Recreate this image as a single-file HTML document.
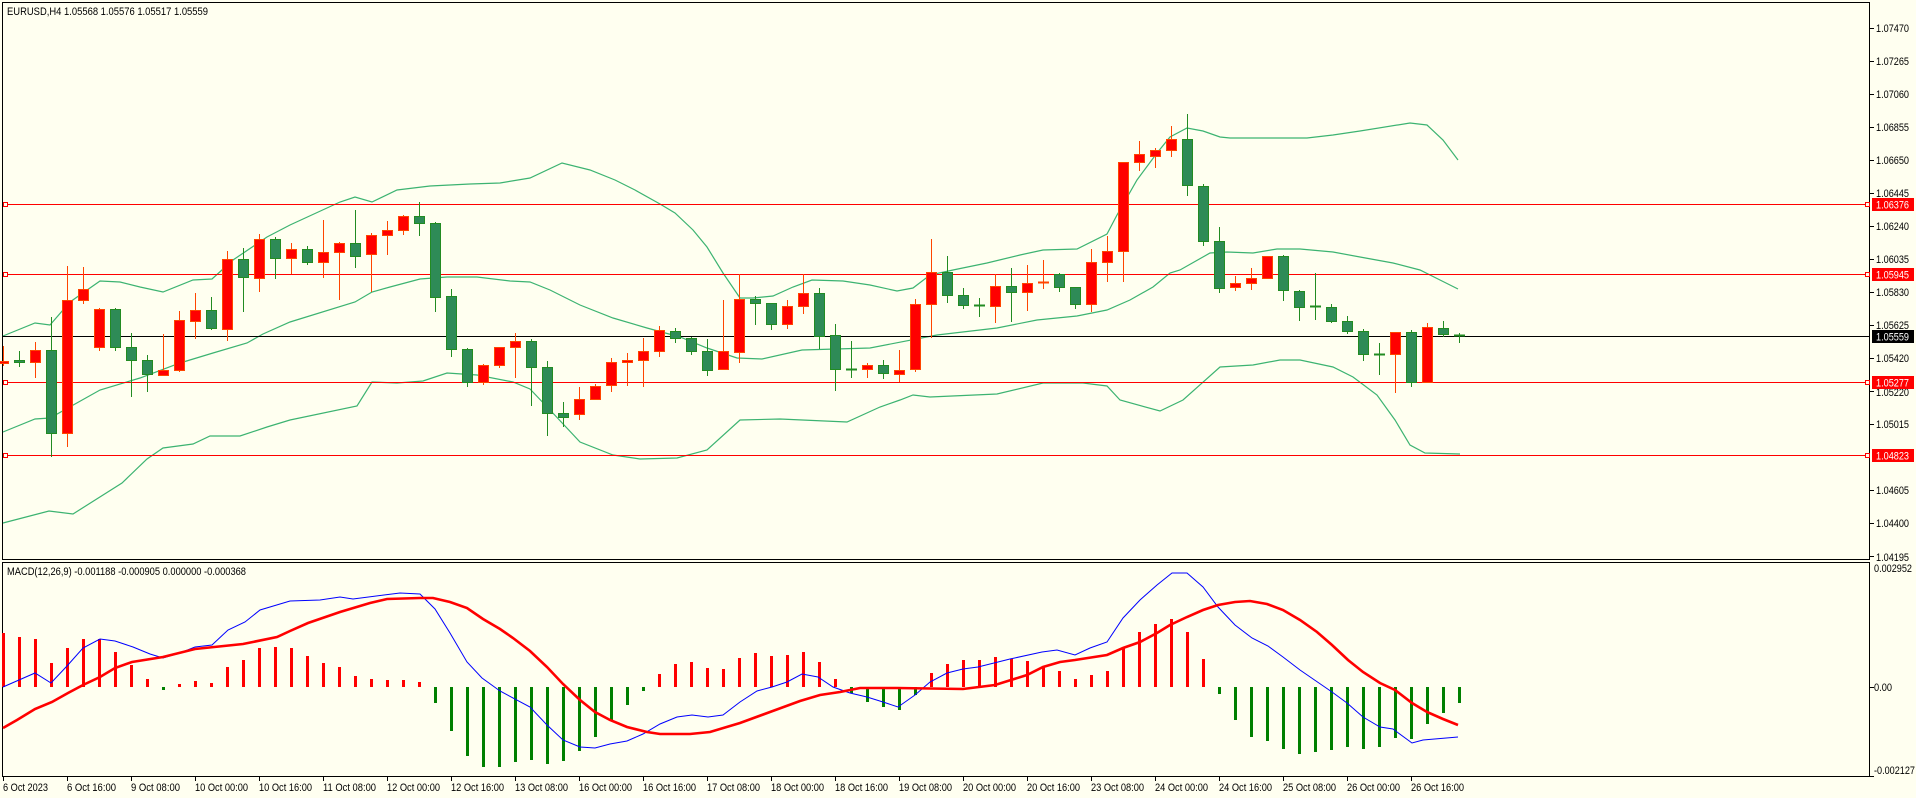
<!DOCTYPE html>
<html><head><meta charset="utf-8">
<style>
html,body{margin:0;padding:0;background:#FFFFF0;}
body{width:1916px;height:798px;overflow:hidden;position:relative;font-family:"Liberation Sans",sans-serif;}
svg{position:absolute;left:0;top:0;}
svg text{font-family:"Liberation Sans",sans-serif;font-size:11px;}
</style></head>
<body>
<svg id="s" width="1916" height="798" viewBox="0 0 1916 798" xmlns="http://www.w3.org/2000/svg">
<rect x="0" y="0" width="1916" height="798" fill="#FFFFF0"/>
<rect x="2.5" y="2.5" width="1867" height="557" fill="none" stroke="#000" stroke-width="1"/>
<rect x="2.5" y="562.5" width="1867" height="214" fill="none" stroke="#000" stroke-width="1"/>
<g id="bands"></g>
<g stroke="#FF0000" stroke-width="1">
<line x1="3" y1="204.5" x2="1869" y2="204.5"/>
<line x1="3" y1="274.5" x2="1869" y2="274.5"/>
<line x1="3" y1="382.5" x2="1869" y2="382.5"/>
<line x1="3" y1="455.5" x2="1869" y2="455.5"/>
</g>
<g fill="#FFFFF0" stroke="#FF0000" stroke-width="1">
<rect x="3.5" y="202.5" width="4" height="4"/><rect x="3.5" y="272.5" width="4" height="4"/>
<rect x="3.5" y="380.5" width="4" height="4"/><rect x="3.5" y="453.5" width="4" height="4"/>
<rect x="1865.5" y="202.5" width="4" height="4"/><rect x="1865.5" y="272.5" width="4" height="4"/>
<rect x="1865.5" y="380.5" width="4" height="4"/><rect x="1865.5" y="453.5" width="4" height="4"/>
</g>
<line x1="3" y1="336.5" x2="1869" y2="336.5" stroke="#000" stroke-width="1"/>
<g id="candles"></g>
<g id="macd"></g>
<text x="7" y="15" fill="#000" textLength="201" lengthAdjust="spacingAndGlyphs">EURUSD,H4  1.05568 1.05576 1.05517 1.05559</text>
<text x="7" y="575" fill="#000" textLength="239" lengthAdjust="spacingAndGlyphs">MACD(12,26,9) -0.001188 -0.000905 0.000000 -0.000368</text>
<g fill="#000" id="ax">
<text x="1876" y="32">1.07470</text>
<text x="1876" y="65">1.07265</text>
<text x="1876" y="98">1.07060</text>
<text x="1876" y="131">1.06855</text>
<text x="1876" y="164">1.06650</text>
<text x="1876" y="197">1.06445</text>
<text x="1876" y="230">1.06240</text>
<text x="1876" y="263">1.06035</text>
<text x="1876" y="296">1.05830</text>
<text x="1876" y="329">1.05625</text>
<text x="1876" y="362">1.05420</text>
<text x="1876" y="396">1.05220</text>
<text x="1876" y="428">1.05015</text>
<text x="1876" y="494">1.04605</text>
<text x="1876" y="527">1.04400</text>
<text x="1876" y="561">1.04195</text>
</g>
<g fill="#000">
<text x="1874" y="572" textLength="38" lengthAdjust="spacingAndGlyphs">0.002952</text>
<text x="1874" y="691" textLength="18" lengthAdjust="spacingAndGlyphs">0.00</text>
<text x="1874" y="774" textLength="41" lengthAdjust="spacingAndGlyphs">-0.002127</text>
</g>
<g stroke="#000" stroke-width="1" id="rt"></g>
<rect x="1872" y="198" width="42" height="13" fill="#FF0000"/><text class="pl" x="1876" y="208.5" fill="#fff">1.06376</text>
<rect x="1872" y="268" width="42" height="13" fill="#FF0000"/><text class="pl" x="1876" y="278.5" fill="#fff">1.05945</text>
<rect x="1872" y="330" width="42" height="13" fill="#000"/><text class="pl" x="1876" y="340.5" fill="#fff">1.05559</text>
<rect x="1872" y="376" width="42" height="13" fill="#FF0000"/><text class="pl" x="1876" y="386.5" fill="#fff">1.05277</text>
<rect x="1872" y="449" width="42" height="13" fill="#FF0000"/><text class="pl" x="1876" y="459.5" fill="#fff">1.04823</text>
<g fill="#000" id="dates">
<text x="3" y="791">6 Oct 2023</text>
<text x="67" y="791">6 Oct 16:00</text>
<text x="131" y="791">9 Oct 08:00</text>
<text x="195" y="791">10 Oct 00:00</text>
<text x="259" y="791">10 Oct 16:00</text>
<text x="323" y="791">11 Oct 08:00</text>
<text x="387" y="791">12 Oct 00:00</text>
<text x="451" y="791">12 Oct 16:00</text>
<text x="515" y="791">13 Oct 08:00</text>
<text x="579" y="791">16 Oct 00:00</text>
<text x="643" y="791">16 Oct 16:00</text>
<text x="707" y="791">17 Oct 08:00</text>
<text x="771" y="791">18 Oct 00:00</text>
<text x="835" y="791">18 Oct 16:00</text>
<text x="899" y="791">19 Oct 08:00</text>
<text x="963" y="791">20 Oct 00:00</text>
<text x="1027" y="791">20 Oct 16:00</text>
<text x="1091" y="791">23 Oct 08:00</text>
<text x="1155" y="791">24 Oct 00:00</text>
<text x="1219" y="791">24 Oct 16:00</text>
<text x="1283" y="791">25 Oct 08:00</text>
<text x="1347" y="791">26 Oct 00:00</text>
<text x="1411" y="791">26 Oct 16:00</text>
</g>
<g id="ticks"></g>
</svg>
<script>
var NS="http://www.w3.org/2000/svg";
function el(p,t,a){var e=document.createElementNS(NS,t);for(var k in a)e.setAttribute(k,a[k]);document.getElementById(p).appendChild(e);return e;}
function fit(t,w){t.setAttribute("textLength",w);t.setAttribute("lengthAdjust","spacingAndGlyphs");}
Array.prototype.forEach.call(document.querySelectorAll("#ax text, text.pl"),function(t){fit(t,33);});
Array.prototype.forEach.call(document.querySelectorAll("#dates text"),function(t){var s=t.textContent;fit(t,s=="6 Oct 2023"?45:(s.length>=12?53:49));});
[28,61,94,127,160,193,226,259,292,325,358,391,424,490,523,556,687,776].forEach(function(y){el("rt","line",{x1:1870,y1:y+0.5,x2:1874,y2:y+0.5});});
for(var k=0;k<23;k++){var x=3.5+64*k;el("ticks","line",{x1:x,y1:777,x2:x,y2:781,stroke:"#000"});}
var upper=[[3,336],[35,323],[50,325],[70,302],[100,281],[120,282],[140,287],[163,292],[193,280],[212,279],[233,260],[267,237],[290,225],[340,202],[355,197],[372,202],[397,190],[430,186],[470,184],[500,183],[530,178],[562,163],[590,170],[615,180],[635,190],[660,204],[675,213],[693,230],[707,247],[723,273],[740,298],[753,298],[773,296],[793,287],[812,280],[843,281],[870,285],[897,291],[913,288],[930,275],[953,270],[987,263],[1020,255],[1043,250],[1077,249],[1107,234],[1117,215],[1137,180],[1157,153],[1170,137],[1187,128],[1203,131],[1220,137],[1230,138],[1307,138],[1333,135],[1360,131],[1410,123],[1427,125],[1443,140],[1458,160]];
var middle=[[3,432],[35,419],[50,418],[100,390],[140,378],[180,363],[213,353],[247,343],[263,334],[290,322],[355,302],[372,292],[390,287],[420,279],[447,277],[477,277],[510,281],[530,282],[550,290],[580,305],[613,318],[647,328],[680,337],[707,348],[737,358],[762,359],[802,350],[870,348],[937,335],[997,328],[1037,320],[1077,316],[1107,310],[1130,300],[1153,287],[1170,273],[1180,270],[1210,253],[1227,252],[1253,253],[1277,249],[1300,249],[1333,252],[1360,257],[1393,263],[1420,270],[1440,280],[1458,289]];
var lower=[[3,523],[49,511],[73,514],[122,483],[147,459],[163,448],[193,444],[210,436],[240,436],[267,427],[290,420],[357,406],[372,382],[397,383],[423,381],[447,373],[477,375],[513,382],[530,389],[550,410],[580,442],[613,455],[640,459],[677,458],[707,450],[740,420],[780,419],[847,422],[880,407],[900,400],[913,395],[930,397],[997,394],[1043,383],[1083,383],[1107,386],[1120,400],[1160,411],[1183,400],[1220,367],[1253,365],[1280,360],[1300,360],[1333,367],[1353,377],[1377,395],[1395,420],[1410,445],[1425,453],[1460,454]];
[upper,middle,lower].forEach(function(b){el("bands","polyline",{points:b.map(function(p){return p.join(",")}).join(" "),fill:"none",stroke:"#3CB371","stroke-width":1.2});});
var C=[["r",361,363,346,366],["g",360,362,351,367],["r",350,362,342,378],["g",350,433,317,457],["r",300,433,266,447],["r",289,300,267,304],["r",309,347,308,351],["g",309,347,308,351],["g",347,360,333,397],["g",360,374,355,392],["r",370,375,334,375],["r",320,370,311,372],["r",310,321,293,339],["g",310,328,297,330],["r",259,329,251,341],["g",259,277,248,312],["r",239,278,234,292],["g",239,258,237,279],["r",249,258,243,274],["g",249,262,246,265],["r",252,262,220,278],["r",243,252,242,300],["g",243,256,210,268],["r",235,254,233,292],["r",230,235,221,255],["r",216,230,215,235],["g",216,223,202,236],["g",223,297,222,312],["g",296,349,289,357],["g",349,382,348,387],["r",365,382,364,385],["r",347,365,347,368],["r",341,347,333,378],["g",341,367,339,406],["g",367,413,361,436],["g",413,417,402,427],["r",399,414,387,420],["r",386,399,384,400],["r",362,385,358,392],["r",360,362,353,386],["r",351,360,338,387],["r",330,351,326,357],["g",331,338,328,343],["g",338,351,337,355],["g",351,370,339,376],["r",351,369,300,369],["r",299,352,274,363],["g",299,303,296,325],["g",303,324,303,330],["r",306,324,300,329],["r",293,306,274,314],["g",293,336,288,349],["g",335,369,324,391],["g",369,370,341,378],["r",365,369,363,378],["g",365,373,360,379],["r",370,374,350,382],["r",304,369,299,372],["r",272,304,239,338],["g",272,295,256,303],["g",295,305,288,309],["g",305,306,298,317],["r",286,306,274,323],["g",286,292,268,322],["r",283,292,265,311],["r",282,283,260,289],["g",274,287,273,292],["g",287,304,287,309],["r",262,304,249,312],["r",251,262,236,282],["r",162,251,162,282],["r",154,162,141,171],["r",150,156,148,168],["r",139,150,126,157],["g",139,185,114,196],["g",186,241,184,246],["g",241,288,227,293],["r",283,287,276,291],["r",278,283,268,290],["r",256,278,256,279],["g",256,290,255,301],["g",291,307,290,321],["g",306,307,273,320],["g",307,321,304,323],["g",321,331,316,334],["g",331,354,329,361],["g",354,354,343,375],["r",332,354,332,393],["g",332,382,330,387],["r",327,382,323,382],["g",328,334,321,337],["g",335,335,333,343]];
C.forEach(function(c,i){
 var x=3+16*i, g=c[0]=="g";
 var wc=g?"#228B22":"#FF4500", fc=g?"#2E8B57":"#FF0000";
 el("candles","line",{x1:x+0.5,y1:c[3],x2:x+0.5,y2:c[4],stroke:wc,"stroke-width":1});
 if(c[2]-c[1]<=1){el("candles","line",{x1:x-5,y1:c[1]+0.5,x2:x+6,y2:c[1]+0.5,stroke:wc,"stroke-width":2});}
 else el("candles","rect",{x:x-4.5,y:c[1]+0.5,width:10,height:c[2]-c[1],fill:fc,stroke:wc,"stroke-width":1});
});
var H=[633,637,639,663,648,639,639,652,665,679,690,684,681,683,667,660,648,647,648,656,663,667,676,679,680,680,682,703,731,756,767,767,762,760,764,761,751,737,720,705,691,674,664,662,668,669,658,653,656,655,652,662,679,693,702,707,710,695,673,664,660,660,657,659,661,666,671,679,675,671,648,632,624,619,632,659,694,720,737,741,749,754,752,750,747,749,747,738,739,724,713,703];
H.forEach(function(y,i){var x=3+16*i;var up=y<687;
 el("macd","rect",{x:x-1,y:up?y:687,width:3,height:Math.max(2,Math.abs(y-687)),fill:up?"#FF0000":"#008000"});});
var blue=[[3,687],[35,673],[51,683],[67,666],[83,648],[100,639],[115,641],[133,647],[150,654],[163,658],[180,653],[195,647],[212,645],[228,630],[245,622],[260,610],[290,601],[320,600],[340,597],[353,599],[400,593],[420,594],[435,609],[450,633],[467,662],[482,678],[500,691],[530,707],[547,725],[563,740],[580,747],[595,748],[610,744],[627,741],[643,734],[660,724],[677,717],[692,715],[708,717],[723,715],[740,702],[757,691],[772,687],[787,682],[802,674],[818,677],[833,687],[850,693],[867,697],[883,702],[898,707],[915,695],[930,682],[947,673],[963,669],[978,667],[1010,659],[1042,652],[1057,650],[1075,655],[1090,648],[1107,642],[1123,618],[1140,600],[1157,585],[1172,573],[1187,573],[1203,587],[1218,607],[1235,625],[1252,638],[1268,646],[1283,657],[1300,670],[1332,692],[1347,703],[1363,717],[1380,727],[1393,729],[1412,743],[1423,740],[1458,737]];
var sig=[[3,728],[17,720],[35,709],[52,702],[68,693],[83,685],[100,677],[115,668],[132,662],[163,657],[195,649],[243,644],[277,637],[290,631],[308,623],[340,612],[370,603],[387,599],[420,598],[433,598],[450,602],[467,608],[483,619],[500,629],[513,638],[530,651],[547,667],[563,684],[580,700],[595,712],[610,720],[627,727],[647,732],[660,734],[690,734],[710,732],[740,723],[770,712],[800,701],[820,695],[840,692],[860,688],[897,688],[963,689],[995,685],[1027,675],[1043,667],[1060,662],[1075,660],[1107,655],[1123,648],[1140,642],[1157,633],[1170,625],[1187,617],[1203,610],[1218,605],[1235,602],[1250,601],[1267,604],[1283,610],[1300,620],[1317,632],[1332,645],[1348,660],[1363,672],[1380,683],[1395,690],[1412,703],[1427,712],[1443,719],[1458,725]];
el("macd","polyline",{points:blue.map(function(p){return p.join(",")}).join(" "),fill:"none",stroke:"#0000FF","stroke-width":1});
el("macd","polyline",{points:sig.map(function(p){return p.join(",")}).join(" "),fill:"none",stroke:"#FF0000","stroke-width":2.6});
</script>
</body></html>
